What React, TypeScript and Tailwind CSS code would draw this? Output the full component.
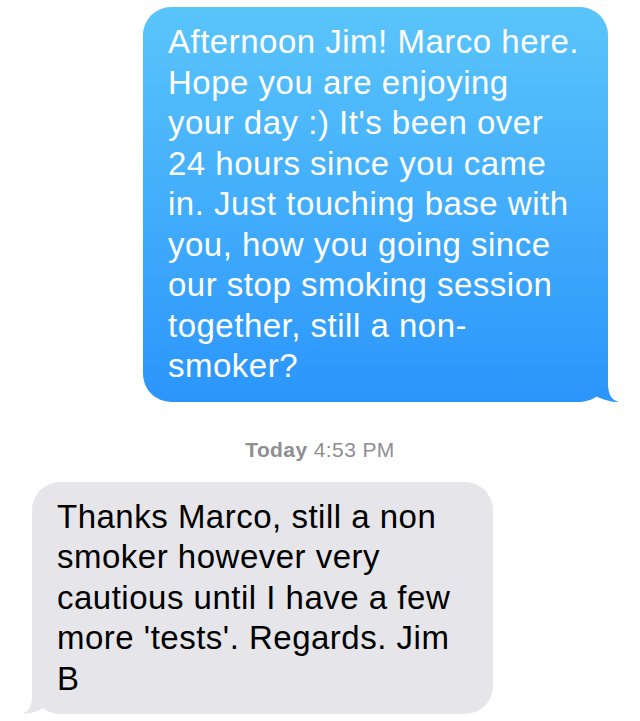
import React from "react";

const blueLines = [
  "Afternoon Jim! Marco here.",
  "Hope you are enjoying",
  "your day :) It's been over",
  "24 hours since you came",
  "in. Just touching base with",
  "you, how you going since",
  "our stop smoking session",
  "together, still a non-",
  "smoker?",
];

const grayLines = [
  "Thanks Marco, still a non",
  "smoker however very",
  "cautious until I have a few",
  "more 'tests'. Regards. Jim",
  "B",
];

export default function App() {
  return (
    <div
      className="w-[640px] h-[721px] bg-white overflow-hidden flex flex-col pt-[7px]"
      style={{ fontFamily: '"Liberation Sans", Arial, sans-serif' }}
    >
      {/* Outgoing blue bubble */}
      <div className="self-end mr-[32px] relative w-[465px]">
        <svg
          className="absolute right-[-14px] bottom-0"
          width="44"
          height="30"
          viewBox="0 0 44 30"
        >
          <defs>
            <linearGradient id="tailBlue" x1="0" y1="0" x2="0" y2="30" gradientUnits="userSpaceOnUse">
              <stop offset="0" stopColor="#2f99fb" />
              <stop offset="1" stopColor="#2b95fb" />
            </linearGradient>
          </defs>
          <path
            d="M0,30 L0,0 L30,0 L30,11 C30,22 33,28 41,30 C35,30.6 24,27.5 15,23 C10,27 5,30 0,30 Z"
            fill="url(#tailBlue)"
          />
        </svg>
        <div className="relative rounded-[28px] bg-gradient-to-b from-[#5ac5fa] to-[#2b95fb] pl-[25px] pr-[10px] pt-[15px] pb-[15px] text-white text-[33px] leading-[40.5px] tracking-[0.5px]">
          {blueLines.map((l, i) => (
            <div key={i} className="whitespace-nowrap">
              {l}
            </div>
          ))}
        </div>
      </div>

      {/* Timestamp */}
      <div className="mt-[36px] text-center text-[21px] leading-[24px] tracking-[0.4px] text-[#8e8e93]">
        <span className="font-bold">Today</span> 4:53 PM
      </div>

      {/* Incoming gray bubble */}
      <div className="self-start ml-[32px] mt-[20px] relative w-[461px]">
        <svg
          className="absolute left-[-12px] bottom-0"
          width="44"
          height="30"
          viewBox="0 0 44 30"
        >
          <path
            d="M44,30 L44,0 L12,0 L12,12 C12,22 9,28 2,29.5 C8,30.3 17,28 23,24 C28,28 36,30 44,30 Z"
            fill="#e5e5ea"
          />
        </svg>
        <div className="relative rounded-[28px] bg-[#e5e5ea] pl-[25px] pr-[10px] pt-[15px] pb-[15px] text-black text-[33px] leading-[40.5px] tracking-[0.5px]">
          {grayLines.map((l, i) => (
            <div key={i} className="whitespace-nowrap">
              {l}
            </div>
          ))}
        </div>
      </div>
    </div>
  );
}
